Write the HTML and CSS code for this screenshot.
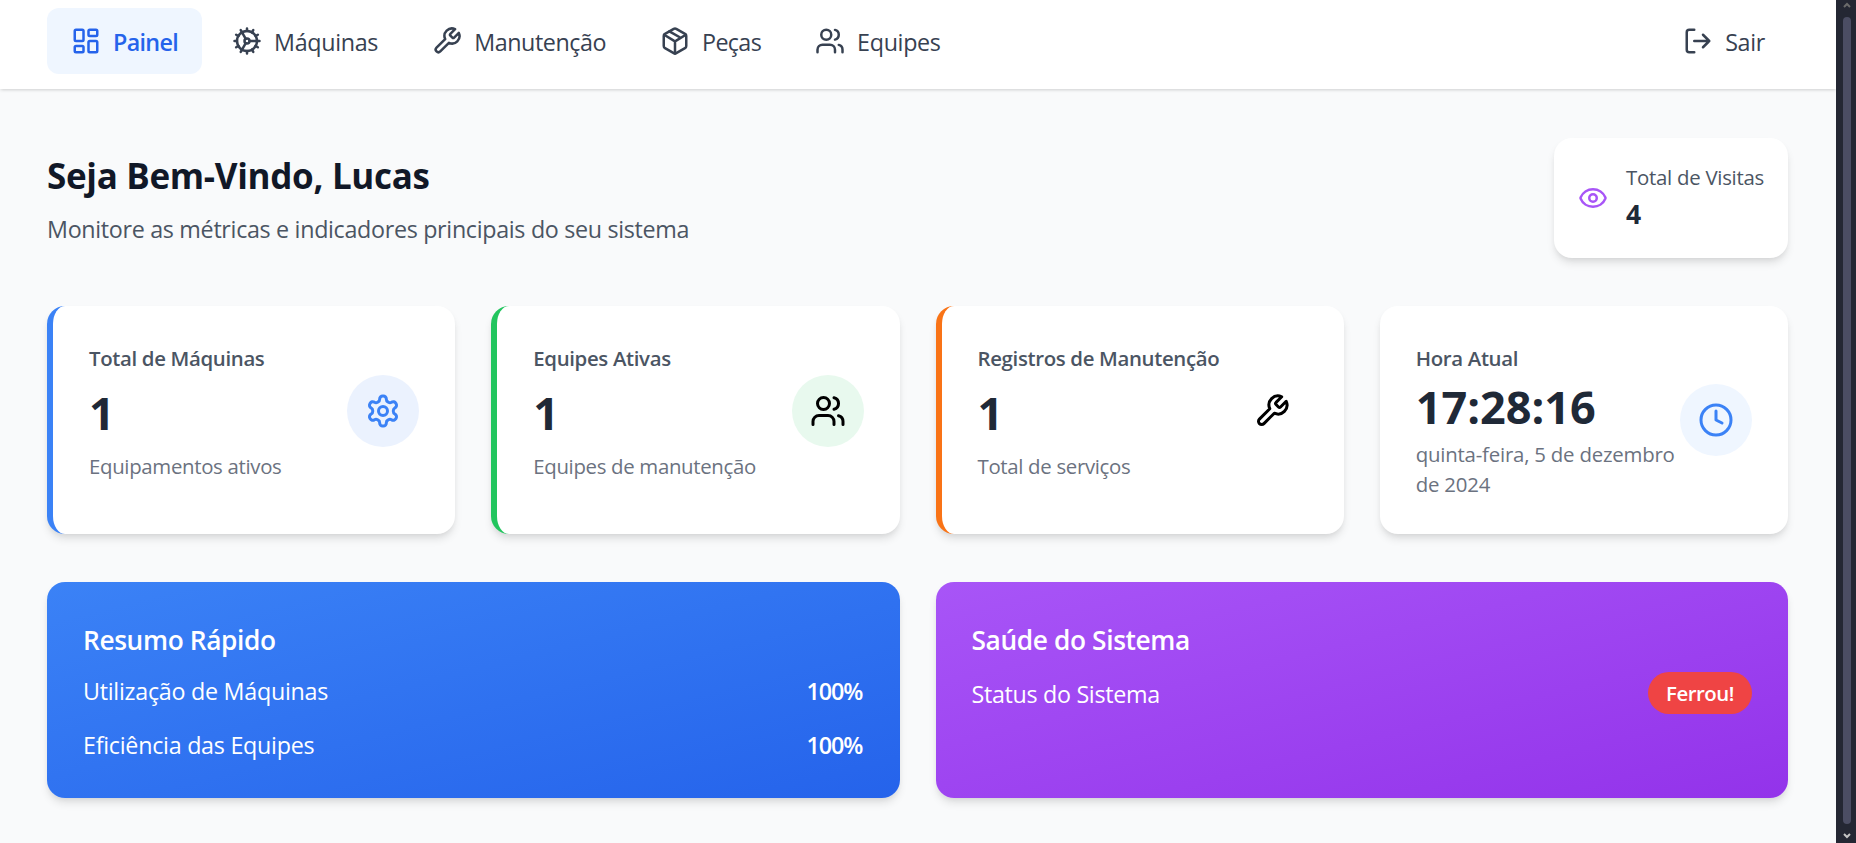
FILE: index.html
```html
<!DOCTYPE html>
<html lang="pt-BR">
<head>
<meta charset="utf-8">
<title>Painel</title>
<link rel="stylesheet" href="styles.css">
</head>
<body>
<svg class="sprite" aria-hidden="true">
  <symbol id="i-dash" viewBox="0 0 24 24"><rect width="7" height="9" x="3" y="3" rx="1"/><rect width="7" height="5" x="14" y="3" rx="1"/><rect width="7" height="9" x="14" y="12" rx="1"/><rect width="7" height="5" x="3" y="16" rx="1"/></symbol>
  <symbol id="i-cog" viewBox="0 0 24 24"><path d="M12 20a8 8 0 1 0 0-16 8 8 0 0 0 0 16Z"/><path d="M12 14a2 2 0 1 0 0-4 2 2 0 0 0 0 4Z"/><path d="M12 2v2M12 22v-2m5 .66-1-1.73m-5-8.66L7 3.34M20.66 17l-1.73-1M3.34 7l1.73 1M14 12h8M2 12h2m16.66-5-1.73 1M3.34 17l1.73-1M17 3.34l-1 1.73m-5 8.66-4 6.93"/></symbol>
  <symbol id="i-wrench" viewBox="0 0 24 24"><path d="M14.7 6.3a1 1 0 0 0 0 1.4l1.6 1.6a1 1 0 0 0 1.4 0l3.77-3.77a6 6 0 0 1-7.94 7.94l-6.91 6.91a2.12 2.12 0 0 1-3-3l6.91-6.91a6 6 0 0 1 7.94-7.94l-3.76 3.76z"/></symbol>
  <symbol id="i-box" viewBox="0 0 24 24"><path d="M11 21.73a2 2 0 0 0 2 0l7-4A2 2 0 0 0 21 16V8a2 2 0 0 0-1-1.73l-7-4a2 2 0 0 0-2 0l-7 4A2 2 0 0 0 3 8v8a2 2 0 0 0 1 1.73z"/><path d="M12 22V12M3.3 7l7.703 4.734a2 2 0 0 0 1.994 0L20.7 7M7.5 4.27l9 5.15"/></symbol>
  <symbol id="i-users" viewBox="0 0 24 24"><path d="M16 21v-2a4 4 0 0 0-4-4H6a4 4 0 0 0-4 4v2"/><circle cx="9" cy="7" r="4"/><path d="M22 21v-2a4 4 0 0 0-3-3.87M16 3.13a4 4 0 0 1 0 7.75"/></symbol>
  <symbol id="i-exit" viewBox="0 0 24 24"><path d="M9 21H5a2 2 0 0 1-2-2V5a2 2 0 0 1 2-2h4M16 17l5-5-5-5M21 12H9"/></symbol>
  <symbol id="i-eye" viewBox="0 0 24 24"><path d="M2.062 12.348a1 1 0 0 1 0-.696 10.75 10.75 0 0 1 19.876 0 1 1 0 0 1 0 .696 10.75 10.75 0 0 1-19.876 0"/><circle cx="12" cy="12" r="3"/></symbol>
  <symbol id="i-gear" viewBox="0 0 24 24"><path d="M12.22 2h-.44a2 2 0 0 0-2 2v.18a2 2 0 0 1-1 1.73l-.43.25a2 2 0 0 1-2 0l-.15-.08a2 2 0 0 0-2.73.73l-.22.38a2 2 0 0 0 .73 2.73l.15.1a2 2 0 0 1 1 1.72v.51a2 2 0 0 1-1 1.74l-.15.09a2 2 0 0 0-.73 2.73l.22.38a2 2 0 0 0 2.73.73l.15-.08a2 2 0 0 1 2 0l.43.25a2 2 0 0 1 1 1.73V20a2 2 0 0 0 2 2h.44a2 2 0 0 0 2-2v-.18a2 2 0 0 1 1-1.73l.43-.25a2 2 0 0 1 2 0l.15.08a2 2 0 0 0 2.73-.73l.22-.39a2 2 0 0 0-.73-2.73l-.15-.08a2 2 0 0 1-1-1.74v-.5a2 2 0 0 1 1-1.74l.15-.09a2 2 0 0 0 .73-2.73l-.22-.38a2 2 0 0 0-2.73-.73l-.15.08a2 2 0 0 1-2 0l-.43-.25a2 2 0 0 1-1-1.73V4a2 2 0 0 0-2-2z"/><circle cx="12" cy="12" r="3"/></symbol>
  <symbol id="i-clock" viewBox="0 0 24 24"><circle cx="12" cy="12" r="10"/><path d="M12 6v6l4 2"/></symbol>
</svg>
<div class="shell">
  <div class="page">
    <nav class="nav">
      <a class="item active"><svg class="icon"><use href="#i-dash"/></svg><span class="tightest">Painel</span></a>
      <a class="item"><svg class="icon"><use href="#i-cog"/></svg><span>Máquinas</span></a>
      <a class="item"><svg class="icon"><use href="#i-wrench"/></svg><span class="tighter">Manutenção</span></a>
      <a class="item"><svg class="icon"><use href="#i-box"/></svg><span class="tightest">Peças</span></a>
      <a class="item"><svg class="icon"><use href="#i-users"/></svg><span>Equipes</span></a>
      <a class="item exit"><svg class="icon"><use href="#i-exit"/></svg><span>Sair</span></a>
    </nav>
    <main class="main">
      <header class="head">
        <div class="intro">
          <h1>Seja Bem-Vindo, Lucas</h1>
          <p>Monitore as métricas e indicadores principais do seu sistema</p>
        </div>
        <div class="visits">
          <svg class="icon"><use href="#i-eye"/></svg>
          <div><p class="visits-label">Total de Visitas</p><p class="visits-value">4</p></div>
        </div>
      </header>
      <section class="cards">
        <article class="card blue">
          <div><h2>Total de Máquinas</h2><p class="value">1</p><p class="note">Equipamentos ativos</p></div>
          <div class="disc"><svg class="icon"><use href="#i-gear"/></svg></div>
        </article>
        <article class="card green">
          <div><h2>Equipes Ativas</h2><p class="value">1</p><p class="note">Equipes de manutenção</p></div>
          <div class="disc"><svg class="icon"><use href="#i-users"/></svg></div>
        </article>
        <article class="card orange">
          <div><h2>Registros de Manutenção</h2><p class="value">1</p><p class="note">Total de serviços</p></div>
          <div class="disc"><svg class="icon"><use href="#i-wrench"/></svg></div>
        </article>
        <article class="card clock">
          <div><h2>Hora Atual</h2><p class="value">17:28:16</p><p class="note">quinta-feira, 5 de dezembro<br>de 2024</p></div>
          <div class="disc"><svg class="icon"><use href="#i-clock"/></svg></div>
        </article>
      </section>
      <section class="panels">
        <article class="panel summary">
          <h3>Resumo Rápido</h3>
          <div class="row"><span>Utilização de Máquinas</span><b>100%</b></div>
          <div class="row"><span>Eficiência das Equipes</span><b>100%</b></div>
        </article>
        <article class="panel health">
          <h3>Saúde do Sistema</h3>
          <div class="row"><span>Status do Sistema</span><span class="pill">Ferrou!</span></div>
        </article>
      </section>
    </main>
  </div>
  <div class="scrollbar">
    <svg class="arrow up" viewBox="0 0 8 6"><path d="M1 5l3-3 3 3"/></svg>
    <div class="thumb"></div>
    <svg class="arrow" viewBox="0 0 8 6"><path d="M1 1l3 3 3-3"/></svg>
  </div>
</div>
</body>
</html>
```
FILE: styles.css
```css
* { box-sizing: border-box; margin: 0; padding: 0; }
body { font-family: "Open Sans", "Noto Sans", sans-serif; font-size: 23.3px; line-height: 36px; letter-spacing: -.32px; color: #1f2937; background: #f9fafb; overflow: hidden; }
.sprite { position: absolute; width: 0; height: 0; }
.icon { width: 30px; height: 30px; flex: none; fill: none; stroke: currentColor; stroke-width: 2; stroke-linecap: round; stroke-linejoin: round; }
.shell { display: flex; height: 843px; }
.page { flex: 1; background: #f9fafb; white-space: nowrap; }

.nav { display: flex; align-items: center; gap: 6px; height: 89px; padding: 0 47px 7px; background: #fff; box-shadow: 0 1.5px 3px rgba(0, 0, 0, .1), 0 1.5px 3px -1.5px rgba(0, 0, 0, .1); }
.item { display: flex; align-items: center; gap: 12px; height: 66px; padding: 0 24px; border-radius: 12px; color: #374151; }
.item span { padding-top: 1px; }
.active { background: #eff6ff; color: #2563eb; font-weight: 600; }
.exit { margin-left: auto; }
.tighter { letter-spacing: -.43px; }
.tightest { letter-spacing: -.67px; }

.main { padding: 49px 48px 0 47px; }
.head { display: flex; justify-content: space-between; align-items: center; height: 120px; }
.intro { padding-bottom: 1px; }
.intro h1 { font-size: 35px; line-height: 54px; font-weight: 700; color: #111827; margin-bottom: 8px; }
.intro p { color: #4b5563; }
.visits { display: flex; align-items: center; gap: 18px; height: 120px; padding: 24px; border-radius: 18px; background: #fff; color: #a855f7; box-shadow: 0 6px 9px -1.5px rgba(0, 0, 0, .1), 0 3px 6px -3px rgba(0, 0, 0, .1); }
.visits-label { font-size: 20.4px; line-height: 31.5px; letter-spacing: -.27px; color: #4b5563; }
.visits-value { font-size: 26.5px; line-height: 40.5px; font-weight: 700; color: #1f2937; }

.cards { display: grid; grid-template-columns: repeat(4, 1fr); gap: 36px; margin-top: 48px; height: 228px; }
.card { display: flex; justify-content: space-between; align-items: flex-start; padding: 36.5px 36px 0; border-radius: 18px; background: #fff; box-shadow: 0 6px 9px -1.5px rgba(0, 0, 0, .1), 0 3px 6px -3px rgba(0, 0, 0, .1); }
.card h2 { font-size: 20.4px; line-height: 31.5px; letter-spacing: -.34px; font-weight: 600; color: #4b5563; }
.value { margin: 12px 0 11px; font-size: 45px; line-height: 54px; font-weight: 700; letter-spacing: 0; color: #1f2937; }
.note { font-size: 20.4px; line-height: 30px; color: #6b7280; }
.card .icon { width: 36px; height: 36px; }
.disc { display: grid; place-items: center; flex: none; width: 72px; height: 72px; margin-top: 32.5px; border-radius: 50%; color: #000; }
.blue { border-left: 6px solid #3b82f6; }
.blue .disc { background: #ebf2fe; color: #3b82f6; }
.green { border-left: 6px solid #22c55e; }
.green .disc { background: #e8f9ee; }
.orange { border-left: 6px solid #f97316; }
.clock .value { margin: 6px 0 5px; }
.clock .note { letter-spacing: -.21px; }
.clock .disc { margin-top: 41.5px; background: #eff6ff; color: #3b82f6; }
.clock > div:first-child { min-width: 0; }

.panels { display: grid; grid-template-columns: 1fr 1fr; gap: 36px; margin-top: 48px; height: 216px; }
.panel { padding: 37.5px 36px 0; border-radius: 18px; color: #fff; box-shadow: 0 6px 9px -1.5px rgba(0, 0, 0, .1), 0 3px 6px -3px rgba(0, 0, 0, .1); }
.summary { background: linear-gradient(to bottom right, #3b82f6, #2563eb); }
.health { background: linear-gradient(to bottom right, #a855f7, #9333ea); }
.panel h3 { font-size: 26.3px; line-height: 40.5px; letter-spacing: -.38px; font-weight: 600; margin-bottom: 12.5px; }
.row { display: flex; justify-content: space-between; align-items: center; }
.row + .row { margin-top: 18px; }
.row b { font-weight: 600; letter-spacing: -1px; margin-right: 1px; }
.summary .row span { letter-spacing: -.27px; }
.health .row { margin-top: -.5px; }
.health .row span:first-child { padding-top: 1px; }
.pill { height: 42px; padding: 0 18px; border-radius: 21px; background: #ef4444; font-size: 20.4px; line-height: 42px; letter-spacing: -.46px; font-weight: 600; }

.scrollbar { display: flex; flex-direction: column; align-items: center; width: 20px; padding: 2px 0 4px 2px; background: #242733; }
.arrow { width: 8px; height: 6px; fill: none; stroke: #c4c4c4; stroke-width: 2; }
.up { stroke: #6b6b6b; }
.thumb { flex: 1; width: 8px; margin: 9px 0; border-radius: 4px; background: #4b4d63; }
```
